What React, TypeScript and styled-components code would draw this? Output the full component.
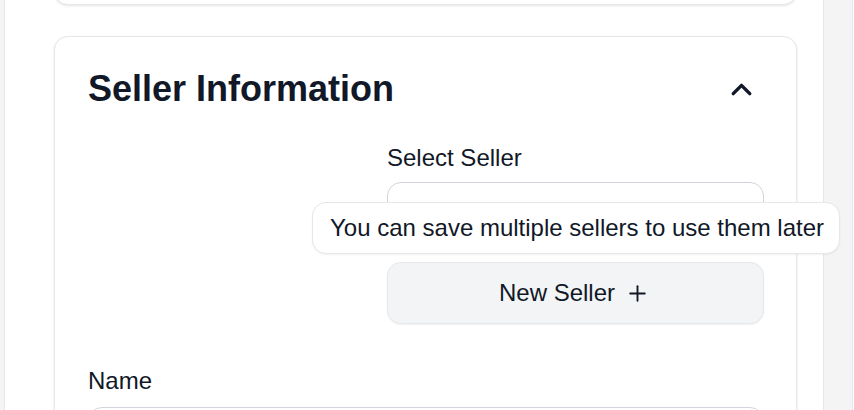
import React from 'react'
import styled, { createGlobalStyle } from 'styled-components'
import { ChevronUp, Plus } from 'lucide-react'

const GlobalStyle = createGlobalStyle`
  html, body {
    margin: 0;
    padding: 0;
    background: #ffffff;
    overflow: hidden;
  }
  body {
    font-family: 'Liberation Sans', Arial, sans-serif;
    color: #111827;
  }
`

const Page = styled.div`
  display: flex;
  height: 410px;
  width: 854px;
  overflow: hidden;
`

const SideRail = styled.div`
  width: 4px;
  flex-shrink: 0;
  background: #f3f4f6;
  border-right: 1px solid #e5e7eb;
`

const ScrollTrack = styled.div`
  width: 28px;
  flex-shrink: 0;
  margin-right: 1px;
  background: #f4f4f5;
  border-left: 1px solid #e5e7eb;
  border-right: 1px solid #e5e7eb;
`

const Main = styled.main`
  flex: 1;
  display: flex;
  flex-direction: column;
  gap: 31px;
  padding: 0 26px 0 49px;
  min-width: 0;
`

const Card = styled.section`
  background: #ffffff;
  border: 1px solid #e5e7eb;
  border-radius: 14px;
  box-shadow: 0 1px 3px rgba(17, 24, 39, 0.08), 0 1px 2px rgba(17, 24, 39, 0.04);
`

const PreviousCard = styled(Card)`
  height: 200px;
  margin-top: -197px;
  flex-shrink: 0;
`

const SellerCard = styled(Card)`
  padding: 31px 32px 40px 33px;
  flex-shrink: 0;
`

const Header = styled.div`
  display: flex;
  align-items: center;
  justify-content: space-between;
`

const Title = styled.h2`
  margin: 0;
  font-size: 36px;
  font-weight: 700;
  color: #111827;
  line-height: normal;
`

const ToggleButton = styled.button`
  display: flex;
  align-items: center;
  justify-content: center;
  padding: 0 6px 0 0;
  border: none;
  background: none;
  color: #111827;
  cursor: pointer;
`

const SelectRow = styled.div`
  display: flex;
  justify-content: flex-end;
  margin-top: 34px;
`

const Field = styled.div<{ $width?: string }>`
  display: flex;
  flex-direction: column;
  width: ${p => p.$width || '100%'};
`

const Label = styled.label<{ $gap?: number }>`
  font-size: 24px;
  line-height: normal;
  color: #111827;
  margin-bottom: ${p => p.$gap ?? 10}px;
`

const SelectWrap = styled.div`
  position: relative;
`

const SelectBox = styled.div`
  height: 62px;
  box-sizing: border-box;
  border: 1px solid #d1d5db;
  border-radius: 14px;
  background: #ffffff;
`

const Tooltip = styled.div`
  position: absolute;
  top: 20px;
  right: -76px;
  width: 528px;
  box-sizing: border-box;
  padding: 11px 17px;
  background: #ffffff;
  border: 1px solid #e5e7eb;
  border-radius: 14px;
  font-size: 24px;
  line-height: normal;
  color: #111827;
  white-space: nowrap;
  box-shadow: 0 1px 2px rgba(17, 24, 39, 0.05);
  z-index: 2;
`

const NewSellerButton = styled.button`
  margin-top: 18px;
  height: 62px;
  display: flex;
  align-items: center;
  justify-content: center;
  gap: 10px;
  padding-left: 4px;
  background: #f3f4f6;
  border: 1px solid #e5e7eb;
  border-radius: 14px;
  font-family: inherit;
  font-size: 24px;
  color: #111827;
  cursor: pointer;
  box-shadow: 0 1px 2px rgba(17, 24, 39, 0.06);
`

const NameField = styled(Field)`
  margin-top: 43px;
`

const TextInput = styled.input`
  height: 62px;
  box-sizing: border-box;
  border: 1px solid #d1d5db;
  border-radius: 14px;
  padding: 0 16px;
  font-family: inherit;
  font-size: 24px;
  color: #111827;
  background: #ffffff;
  outline: none;
`

const App: React.FC = () => {
  return (
    <Page>
      <GlobalStyle />
      <SideRail />
      <Main>
        <PreviousCard />
        <SellerCard>
          <Header>
            <Title>Seller Information</Title>
            <ToggleButton aria-label='Collapse section'>
              <ChevronUp size={33} strokeWidth={2.5} />
            </ToggleButton>
          </Header>

          <SelectRow>
            <Field $width='377px'>
              <Label>Select Seller</Label>
              <SelectWrap>
                <SelectBox />
                <Tooltip>You can save multiple sellers to use them later</Tooltip>
              </SelectWrap>
              <NewSellerButton>
                New Seller
                <Plus size={25} strokeWidth={1.8} />
              </NewSellerButton>
            </Field>
          </SelectRow>

          <NameField>
            <Label $gap={12}>Name</Label>
            <TextInput />
          </NameField>
        </SellerCard>
      </Main>
      <ScrollTrack />
    </Page>
  )
}

export default App
